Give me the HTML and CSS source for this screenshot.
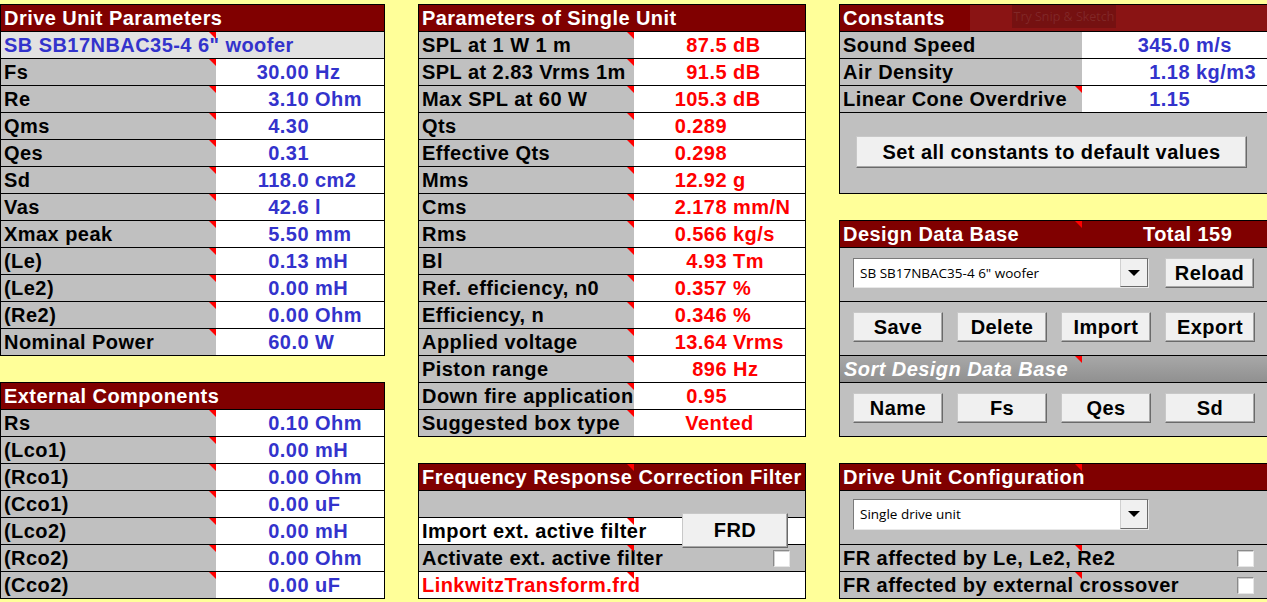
FILE: index.html
```html
<!DOCTYPE html>
<html>
<head>
<meta charset="utf-8">
<title>Drive Unit Parameters</title>
<link rel="stylesheet" href="styles.css">
</head>
<body>
<div class="sheet">
  <div class="col col1">
    <section class="panel">
      <div class="hdr">Drive Unit Parameters</div>
      <div class="row full name-row"><span class="blue">SB SB17NBAC35-4 6" woofer</span><i class="mark m215"></i></div>
      <div class="row"><div class="lbl">Fs<i class="mark"></i></div><div class="val blue"><span class="num">30.00</span> Hz</div></div>
      <div class="row"><div class="lbl">Re<i class="mark"></i></div><div class="val blue"><span class="num">3.10</span> Ohm</div></div>
      <div class="row"><div class="lbl">Qms<i class="mark"></i></div><div class="val blue"><span class="num">4.30</span></div></div>
      <div class="row"><div class="lbl">Qes<i class="mark"></i></div><div class="val blue"><span class="num">0.31</span></div></div>
      <div class="row"><div class="lbl">Sd<i class="mark"></i></div><div class="val blue"><span class="num">118.0</span> cm2</div></div>
      <div class="row"><div class="lbl">Vas<i class="mark"></i></div><div class="val blue"><span class="num">42.6</span> l</div></div>
      <div class="row"><div class="lbl">Xmax peak<i class="mark"></i></div><div class="val blue"><span class="num">5.50</span> mm</div></div>
      <div class="row"><div class="lbl">(Le)<i class="mark"></i></div><div class="val blue"><span class="num">0.13</span> mH</div></div>
      <div class="row"><div class="lbl">(Le2)<i class="mark"></i></div><div class="val blue"><span class="num">0.00</span> mH</div></div>
      <div class="row"><div class="lbl">(Re2)<i class="mark"></i></div><div class="val blue"><span class="num">0.00</span> Ohm</div></div>
      <div class="row"><div class="lbl">Nominal Power<i class="mark"></i></div><div class="val blue"><span class="num">60.0</span> W</div></div>
    </section>
    <section class="panel">
      <div class="hdr">External Components</div>
      <div class="row"><div class="lbl">Rs<i class="mark"></i></div><div class="val blue"><span class="num">0.10</span> Ohm</div></div>
      <div class="row"><div class="lbl">(Lco1)<i class="mark"></i></div><div class="val blue"><span class="num">0.00</span> mH</div></div>
      <div class="row"><div class="lbl">(Rco1)<i class="mark"></i></div><div class="val blue"><span class="num">0.00</span> Ohm</div></div>
      <div class="row"><div class="lbl">(Cco1)<i class="mark"></i></div><div class="val blue"><span class="num">0.00</span> uF</div></div>
      <div class="row"><div class="lbl">(Lco2)<i class="mark"></i></div><div class="val blue"><span class="num">0.00</span> mH</div></div>
      <div class="row"><div class="lbl">(Rco2)<i class="mark"></i></div><div class="val blue"><span class="num">0.00</span> Ohm</div></div>
      <div class="row"><div class="lbl">(Cco2)<i class="mark"></i></div><div class="val blue"><span class="num">0.00</span> uF</div></div>
    </section>
  </div>

  <div class="col col2">
    <section class="panel">
      <div class="hdr">Parameters of Single Unit</div>
      <div class="row"><div class="lbl">SPL at 1 W 1 m<i class="mark"></i></div><div class="val red"><span class="num">87.5</span> dB</div></div>
      <div class="row"><div class="lbl">SPL at 2.83 Vrms 1m<i class="mark"></i></div><div class="val red"><span class="num">91.5</span> dB</div></div>
      <div class="row"><div class="lbl">Max SPL at 60 W<i class="mark"></i></div><div class="val red"><span class="num">105.3</span> dB</div></div>
      <div class="row"><div class="lbl">Qts<i class="mark"></i></div><div class="val red"><span class="num">0.289</span></div></div>
      <div class="row"><div class="lbl">Effective Qts<i class="mark"></i></div><div class="val red"><span class="num">0.298</span></div></div>
      <div class="row"><div class="lbl">Mms<i class="mark"></i></div><div class="val red"><span class="num">12.92</span> g</div></div>
      <div class="row"><div class="lbl">Cms<i class="mark"></i></div><div class="val red"><span class="num">2.178</span> mm/N</div></div>
      <div class="row"><div class="lbl">Rms<i class="mark"></i></div><div class="val red"><span class="num">0.566</span> kg/s</div></div>
      <div class="row"><div class="lbl">Bl<i class="mark"></i></div><div class="val red"><span class="num">4.93</span> Tm</div></div>
      <div class="row"><div class="lbl">Ref. efficiency, n0<i class="mark"></i></div><div class="val red"><span class="num">0.357</span> %</div></div>
      <div class="row"><div class="lbl">Efficiency, n<i class="mark"></i></div><div class="val red"><span class="num">0.346</span> %</div></div>
      <div class="row"><div class="lbl">Applied voltage<i class="mark"></i></div><div class="val red"><span class="num">13.64</span> Vrms</div></div>
      <div class="row"><div class="lbl">Piston range<i class="mark"></i></div><div class="val red"><span class="num">896</span> Hz</div></div>
      <div class="row"><div class="lbl">Down fire application<i class="mark"></i></div><div class="val red"><span class="num">0.95</span></div></div>
      <div class="row"><div class="lbl">Suggested box type<i class="mark"></i></div><div class="val red center">Vented</div></div>
    </section>
    <section class="panel frc">
      <div class="hdr">Frequency Response Correction Filter<i class="mark m215"></i></div>
      <div class="row full"></div>
      <div class="row full white">Import ext. active filter<i class="mark m215"></i></div>
      <div class="row full split">Activate ext. active filter<i class="mark m215"></i><span class="chk"></span></div>
      <div class="row full white red">LinkwitzTransform.frd<i class="mark m215"></i></div>
      <div class="btn frd">FRD</div>
    </section>
  </div>

  <div class="col col3">
    <section class="panel">
      <div class="hdr">Constants</div>
      <div class="row"><div class="lbl">Sound Speed</div><div class="val blue"><span class="num">345.0</span> m/s</div></div>
      <div class="row"><div class="lbl">Air Density</div><div class="val blue"><span class="num">1.18</span> kg/m3</div></div>
      <div class="row"><div class="lbl">Linear Cone Overdrive<i class="mark"></i></div><div class="val blue"><span class="num">1.15</span></div></div>
      <div class="blk cst"><div class="btn wide">Set all constants to default values</div></div>
    </section>
    <section class="panel">
      <div class="hdr"><span class="ddb-title">Design Data Base</span>Total 159<i class="mark m242"></i></div>
      <div class="blk">
        <div class="combo"><span class="combo-text">SB SB17NBAC35-4 6" woofer</span><span class="combo-arrow"><i class="tri"></i></span></div>
        <div class="btn">Reload</div>
      </div>
      <div class="blk">
        <div class="btn">Save</div>
        <div class="btn">Delete</div>
        <div class="btn">Import</div>
        <div class="btn">Export</div>
      </div>
      <div class="shdr">Sort Design Data Base<i class="mark m242"></i></div>
      <div class="blk">
        <div class="btn">Name</div>
        <div class="btn">Fs</div>
        <div class="btn">Qes</div>
        <div class="btn">Sd</div>
      </div>
    </section>
    <section class="panel">
      <div class="hdr">Drive Unit Configuration<i class="mark m242"></i></div>
      <div class="blk duc">
        <div class="combo"><span class="combo-text">Single drive unit</span><span class="combo-arrow"><i class="tri"></i></span></div>
      </div>
      <div class="row full cbrow">FR affected by Le, Le2, Re2<i class="mark m242"></i><span class="chk"></span></div>
      <div class="row full cbrow">FR affected by external crossover<i class="mark m242"></i><span class="chk"></span></div>
    </section>
  </div>
</div>
<div class="snip"></div>
<div class="snip-box">Try Snip &amp; Sketch</div>
</body>
</html>
```

FILE: styles.css
```css
* { box-sizing: border-box; }
html, body { margin: 0; padding: 0; }
body {
  width: 1267px;
  height: 602px;
  overflow: hidden;
  position: relative;
  background: #FFFF99;
  font-family: "Liberation Sans", Arial, sans-serif;
  font-weight: bold;
  font-size: 20px;
  letter-spacing: 0.45px;
  color: #000;
}
.sheet {
  display: flex;
  align-items: flex-start;
  gap: 33px;
  padding-top: 4px;
}
.col { display: flex; flex-direction: column; gap: 26px; flex: none; }
.col1 { width: 385px; }
.col2 { width: 388px; }
.col3 { width: 440px; }

.panel { border: 1px solid #000; background: #C0C0C0; position: relative; }

.hdr {
  height: 26px;
  line-height: 26px;
  background: #800000;
  color: #fff;
  padding-left: 3px;
  white-space: nowrap;
  position: relative;
}
.ddb-title { display: inline-block; width: 300px; }

.row {
  height: 27px;
  border-top: 1px solid #000;
  line-height: 26px;
  display: grid;
  grid-template-columns: 215px 1fr;
  position: relative;
  white-space: nowrap;
}
.col3 .row { grid-template-columns: 242px 1fr; }
.lbl { padding-left: 3px; background: #C0C0C0; position: relative; }
.val { background: #fff; }
.num { display: inline-block; width: 93px; text-align: right; }
.col3 .num { width: 108px; }
.center { text-align: center; }
.blue { color: #3333CC; }
.red { color: #FF0000; }

.row.full { display: block; padding-left: 3px; background: #C0C0C0; }
.row.full.white { background: #fff; }
.name-row.row.full { background: #E2E2E2; }
.row.full.split { display: flex; align-items: center; justify-content: space-between; padding-right: 15px; }
.row.full.cbrow { display: grid; grid-template-columns: 394px 17px; align-items: center; }

.mark {
  position: absolute;
  top: 0;
  width: 0;
  height: 0;
  border-top: 7px solid #FF0000;
  border-left: 7px solid transparent;
  z-index: 2;
}
.lbl .mark { right: 0; }
.mark.m215 { left: 208px; }
.mark.m242 { left: 235px; }

.chk {
  display: block;
  width: 17px;
  height: 17px;
  background: #fff;
  border: 1px solid;
  border-color: #8a8a8a #e6e6e6 #e6e6e6 #8a8a8a;
  box-shadow: inset 1px 1px 0 #d0d0d0;
}

.btn {
  display: flex;
  align-items: center;
  justify-content: center;
  width: 90px;
  height: 30px;
  background: #F0F0F0;
  border: 1px solid;
  border-color: #c8c8c8 #6a6a6a #6a6a6a #c8c8c8;
  box-shadow: inset -1px -1px 0 #a8a8a8;
  color: #000;
  white-space: nowrap;
  flex: none;
}
.btn.wide { width: 391px; height: 32px; }
.btn.frd { position: absolute; left: 263px; top: 49px; width: 106px; height: 35px; z-index: 3; }

.blk {
  height: 54px;
  border-top: 1px solid #000;
  padding: 10px 0 0 13px;
  display: flex;
  gap: 14px;
}
.blk.cst { height: 81px; padding: 23px 0 0 16px; }
.blk.duc { padding-top: 8px; }
.blk > .combo + .btn { margin-left: 2px; width: 89px; }

.shdr {
  height: 27px;
  line-height: 26px;
  border-top: 1px solid #000;
  background: linear-gradient(#a8a8a8, #909090);
  color: #fff;
  font-style: italic;
  padding-left: 4px;
  position: relative;
  white-space: nowrap;
}

.combo {
  display: flex;
  width: 296px;
  height: 30px;
  background: #fff;
  border: 1px solid;
  border-color: #7a7a7a #e8e8e8 #e8e8e8 #7a7a7a;
  flex: none;
}
.duc .combo { height: 31px; }
.combo-text {
  flex: 1;
  padding-left: 6px;
  font-family: "Open Sans", "Noto Sans", sans-serif;
  font-weight: normal;
  font-size: 13.5px;
  letter-spacing: 0;
  line-height: 28px;
  white-space: nowrap;
  overflow: hidden;
}
.combo-arrow {
  width: 28px;
  display: flex;
  align-items: center;
  justify-content: center;
  background: #F0F0F0;
  border-left: 1px solid #d0d0d0;
  border-right: 1px solid #6a6a6a;
  border-bottom: 1px solid #6a6a6a;
}
.tri {
  width: 0;
  height: 0;
  border-left: 6px solid transparent;
  border-right: 6px solid transparent;
  border-top: 6px solid #000;
}

.snip {
  position: absolute;
  left: 970px;
  top: 5px;
  right: 0;
  height: 26px;
  background: rgba(255, 255, 255, 0.08);
}
.snip-box {
  position: absolute;
  left: 1012px;
  top: 5px;
  width: 104px;
  height: 23px;
  background: rgba(0, 0, 0, 0.15);
  color: rgba(255, 255, 255, 0.1);
  font-family: "Open Sans", "Noto Sans", sans-serif;
  font-weight: normal;
  font-size: 12.5px;
  letter-spacing: 0;
  line-height: 23px;
  text-align: center;
  white-space: nowrap;
}
```
